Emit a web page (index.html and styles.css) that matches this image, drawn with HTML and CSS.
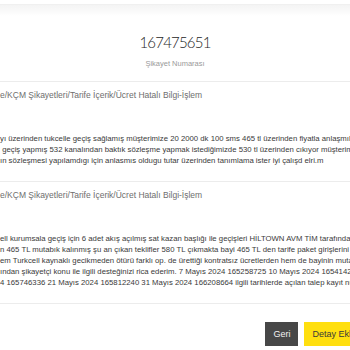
FILE: index.html
```html
<!DOCTYPE html>
<html lang="tr">
<head>
  <meta charset="UTF-8">
  <meta name="viewport" content="width=device-width, initial-scale=1.0">
  <title>Şikayet Detayı</title>
  <link rel="stylesheet" href="styles.css">
</head>
<body>
  <!-- Üst gölge -->
  <div class="top-shadow"></div>

  <div class="page">
    <div class="complaint-head">
      <div class="complaint-no">167475651</div>
      <div class="complaint-label">Şikayet Numarası</div>
    </div>

    <div class="entry">
      <div class="category">e/KÇM Şikayetleri/Tarife İçerik/Ücret Hatalı Bilgi-İşlem</div>
      <div class="desc">
        <div class="ln">yı üzerinden tukcelle geçiş sağlamış müşterimize 20 2000 dk 100 sms 465 tl üzerinden fiyatla anlaşmıldı</div>
        <div class="ln"> geçiş yapmış 532 kanalından baktık sözleşme yapmak istediğimizde 530 tl üzerinden cıkıyor müşterimizin</div>
        <div class="ln">ın sözleşmesi yapılamdıgı için anlasmıs oldugu tutar üzerinden tanımlama ister iyi çalışd elri.m</div>
      </div>
    </div>

    <div class="entry">
      <div class="category">e/KÇM Şikayetleri/Tarife İçerik/Ücret Hatalı Bilgi-İşlem</div>
      <div class="desc">
        <div class="ln">ell kurumsala geçiş için 6 adet akış açılmış sat kazan başlığı ile geçişleri HİLTOWN AVM TİM tarafından</div>
        <div class="ln">n 465 TL mutabık kalınmış şu an çıkan teklifler 580 TL çıkmakta bayi 465 TL den tarife paket girişlerini yapamıyor</div>
        <div class="ln">em Turkcell kaynaklı gecikmeden ötürü farklı op. de ürettiği kontratsız ücretlerden hem de bayinin mutabık</div>
        <div class="ln">ından şikayetçi konu ile ilgili desteğinizi rica ederim. 7 Mayıs 2024 165258725 10 Mayıs 2024 165414220</div>
        <div class="ln">4 165746336 21 Mayıs 2024 165812240 31 Mayıs 2024 166208664 ilgili tarihlerde açılan talep kayıt numaraları</div>
      </div>
    </div>

    <div class="actions">
      <button class="btn btn-back">Geri</button>
      <button class="btn btn-add">Detay Ekle</button>
    </div>
  </div>
</body>
</html>
```

FILE: styles.css
```css
body {
  margin: 0;
  background: #fff;
  font-family: 'Liberation Sans', Arial, sans-serif;
  overflow: hidden;
  width: 350px;
  height: 350px;
}

.top-shadow {
  margin-top: 4px;
  height: 11px;
  border-top: 1px solid #f0f0f0;
  background: linear-gradient(180deg, #f4f4f4 0%, #fafafa 60%, #ffffff 100%);
}

.page {
  width: 400px;
  margin-left: -25px;
}

/* Başlık */
.complaint-head {
  text-align: center;
  padding-top: 16px;
  height: 49px;
  border-bottom: 1px solid #ececec;
}

.complaint-no {
  font-family: 'Lato', sans-serif;
  font-weight: 300;
  font-size: 15px;
  letter-spacing: -0.8px;
  line-height: 20px;
  color: #1c1c1c;
}

.complaint-label {
  margin-top: 7px;
  font-size: 7.5px;
  line-height: 9px;
  color: #9a9a9a;
}

/* Şikayet kayıtları */
.entry {
  padding: 8px 0 15px 25px;
  border-bottom: 1px solid #ececec;
}

.category {
  font-size: 8.5px;
  line-height: 10px;
  color: #6e6e6e;
  white-space: nowrap;
}

.desc {
  margin-top: 33px;
  font-size: 7.75px;
  line-height: 11px;
  color: #3a3a3a;
}

.ln {
  white-space: pre;
}

/* Butonlar */
.actions {
  display: flex;
  justify-content: flex-end;
  gap: 6px;
  padding-top: 18px;
  padding-right: 11px;
}

.btn {
  border: none;
  height: 24px;
  font-family: 'Liberation Sans', Arial, sans-serif;
  font-size: 9px;
  padding: 0 8px;
}

.btn-back {
  background: #474747;
  color: #f2f2f2;
  width: 33px;
}

.btn-add {
  background: #ffdf0f;
  color: #3a3a3a;
}
```
